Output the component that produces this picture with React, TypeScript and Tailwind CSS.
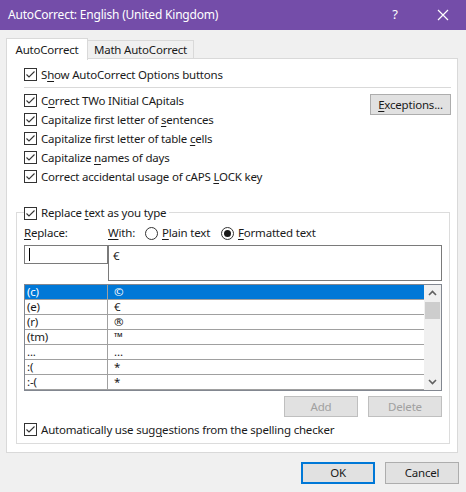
import React from 'react';

const font = { fontFamily: '"Noto Sans", "Open Sans", sans-serif', letterSpacing: '-0.2px' };

function CheckBox({ checked = true }: { checked?: boolean }) {
  return (
    <svg width="13" height="13" viewBox="0 0 13 13" className="shrink-0">
      <rect x="0.5" y="0.5" width="12" height="12" fill="white" stroke="#333333" />
      {checked && <polyline points="2.5,6.5 5,9 10.5,3.5" fill="none" stroke="#333333" strokeWidth="1.1" />}
    </svg>
  );
}

function Radio({ checked = false }: { checked?: boolean }) {
  return (
    <svg width="13" height="13" viewBox="0 0 13 13" className="shrink-0">
      <circle cx="6.5" cy="6.5" r="6" fill="white" stroke="#333333" />
      {checked && <circle cx="6.5" cy="6.5" r="3.5" fill="#1a1a1a" />}
    </svg>
  );
}

function Check({ pre, key1, post }: { pre: string; key1: string; post: string }) {
  return (
    <div className="flex items-center h-[19px]">
      <CheckBox />
      <span className="ml-[4px] whitespace-nowrap">
        {pre}
        <span className="underline underline-offset-2">{key1}</span>
        {post}
      </span>
    </div>
  );
}

const rows: [string, string][] = [
  ['(c)', '©'],
  ['(e)', '€'],
  ['(r)', '®'],
  ['(tm)', '™'],
  ['...', '…'],
  [':(', '*'],
  [':-(', '*'],
];

export default function App() {
  return (
    <div className="w-[466px] h-[492px] bg-[#f0f0f0] text-[11.5px] text-[#1a1a1a] overflow-hidden" style={font}>
      {/* title bar */}
      <div className="h-[30px] bg-[#744da9] text-white flex items-center">
        <span className="ml-[8px] text-[12px] flex-1">AutoCorrect: English (United Kingdom)</span>
        <span className="text-[13px] w-[46px] text-center mr-[2px]">?</span>
        <svg width="46" height="30" viewBox="0 0 46 30">
          <path d="M18 10 L28 20 M28 10 L18 20" stroke="white" strokeWidth="1.2" />
        </svg>
      </div>

      {/* tabs */}
      <div className="flex items-end pl-[6px] pt-[7px] h-[29px]">
        <div className="h-[22px] w-[82px] bg-white border border-b-0 border-[#d9d9d9] flex items-center justify-center relative z-10 -mb-px">
          AutoCorrect
        </div>
        <div className="h-[19px] w-[106px] border border-l-0 border-b-0 border-[#d9d9d9] flex items-center justify-center">
          Math AutoCorrect
        </div>
      </div>

      {/* panel */}
      <div className="ml-[6px] w-[452px] h-[395px] bg-white border border-[#d9d9d9] -mt-px pl-[17px] pt-[6px]">
        <Check pre="S" key1="h" post="ow AutoCorrect Options buttons" />
        <div className="h-px bg-[#d9d9d9] w-[427px] mt-[3px]" />

        <div className="flex mt-[3px] w-[427px] justify-between">
          <div>
            <Check pre="C" key1="o" post="rrect TWo INitial CApitals" />
            <Check pre="Capitalize first letter of " key1="s" post="entences" />
            <Check pre="Capitalize first letter of table " key1="c" post="ells" />
            <Check pre="Capitalize " key1="n" post="ames of days" />
            <Check pre="Correct accidental usage of cAPS " key1="L" post="OCK key" />
          </div>
          <div className="mt-[3px] h-[21px] w-[81px] bg-[#e1e1e1] border border-[#adadad] flex items-center justify-center">
            <span>
              <span className="underline underline-offset-2">E</span>xceptions...
            </span>
          </div>
        </div>

        {/* group box */}
        <div className="-ml-[8px] mt-[26px] w-[434px] h-[232px] border border-[#dcdcdc] pl-[7px]">
          <div className="-mt-[8px] h-[16px] flex items-center bg-white w-fit pr-[3px]">
            <CheckBox />
            <span className="ml-[4px]">
              Replace <span className="underline underline-offset-2">t</span>ext as you type
            </span>
          </div>

          <div className="flex items-center h-[18px] mt-[3px]">
            <span className="w-[84px]">
              <span className="underline underline-offset-2">R</span>eplace:
            </span>
            <span className="w-[37px]">
              <span className="underline underline-offset-2">W</span>ith:
            </span>
            <Radio />
            <span className="ml-[4px] w-[59px]">
              <span className="underline underline-offset-2">P</span>lain text
            </span>
            <Radio checked />
            <span className="ml-[4px]">
              <span className="underline underline-offset-2">F</span>ormatted text
            </span>
          </div>

          <div className="flex mt-[3px] items-start">
            <div className="w-[84px] h-[19px] border border-[#7a7a7a] bg-white flex items-center pl-[4px]">
              <div className="w-px h-[13px] bg-black" />
            </div>
            <div className="w-[334px] h-[36px] border border-[#7a7a7a] bg-white pl-[4px] pt-[1px]">€</div>
          </div>

          {/* list */}
          <div className="mt-[3px] w-[418px] h-[107px] border border-[#828790] bg-white flex">
            <div className="flex-1">
              {rows.map(([a, b], i) => (
                <div
                  key={i}
                  className={
                    'flex h-[15px] border-b border-[#a0a0a0] leading-[14px] ' +
                    (i === 0 ? 'bg-[#0078d7] text-white' : '')
                  }
                >
                  <div className="w-[83px] pl-[2px] border-r border-[#a0a0a0]">{a}</div>
                  <div className="pl-[6px]">{b}</div>
                </div>
              ))}
            </div>
            <div className="w-[17px] bg-[#f0f0f0] flex flex-col items-center">
              <svg width="17" height="17" viewBox="0 0 17 17">
                <path d="M5 10 L8.5 6.5 L12 10" fill="none" stroke="#606060" strokeWidth="1.6" />
              </svg>
              <div className="w-[15px] h-[17px] bg-[#cdcdcd]" />
              <div className="flex-1" />
              <svg width="17" height="17" viewBox="0 0 17 17">
                <path d="M5 7 L8.5 10.5 L12 7" fill="none" stroke="#606060" strokeWidth="1.6" />
              </svg>
            </div>
          </div>

          <div className="flex justify-end gap-[10px] mt-[5px] w-[418px]">
            <div className="w-[74px] h-[21px] bg-[#e1e1e1] border border-[#bfbfbf] text-[#a0a0a0] flex items-center justify-center">
              Add
            </div>
            <div className="w-[74px] h-[21px] bg-[#e1e1e1] border border-[#bfbfbf] text-[#a0a0a0] flex items-center justify-center">
              Delete
            </div>
          </div>

          <div className="mt-[3px]">
            <Check pre="Automatically use su" key1="gg" post="estions from the spelling checker" />
          </div>
        </div>
      </div>

      {/* footer buttons */}
      <div className="flex justify-end gap-[10px] pr-[7px] mt-[9px]">
        <div className="w-[74px] h-[22px] bg-[#e1e1e1] border-2 border-[#0078d7] flex items-center justify-center">OK</div>
        <div className="w-[74px] h-[22px] bg-[#e1e1e1] border border-[#adadad] flex items-center justify-center">Cancel</div>
      </div>
    </div>
  );
}
